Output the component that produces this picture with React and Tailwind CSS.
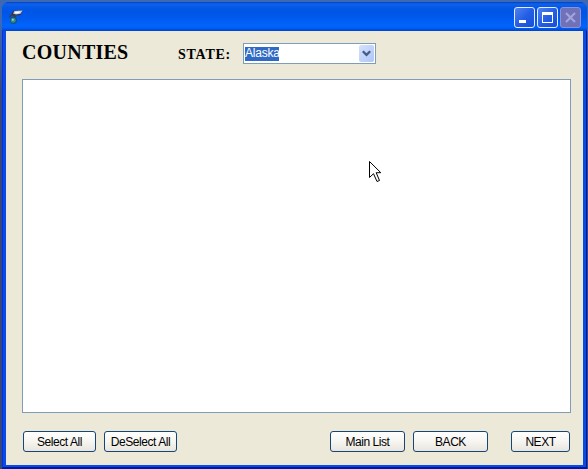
import React from "react";

function AppIcon() {
  return (
    <svg width="16" height="16" viewBox="0 0 16 16" className="block">
      <path d="M3 5.500 L5 2 L14.500 1.500 L12.500 6 L8 6.500 Z" fill="#2b3350" />
      <path d="M5 4.500 L6.500 2 L14.500 1.500 L12.500 4.800 L8 5.500 Z" fill="#cfc9cb" />
      <path d="M7 3 L12 2.400 L11 4 L7.500 4.600 Z" fill="#fff" />
      <path d="M2 8.500 Q2 5.500 5.500 6.500 L8 7.500" fill="none" stroke="#3c3f49" strokeWidth="1.500" />
      <circle cx="5.500" cy="11.300" r="3.500" fill="#214e62" />
      <circle cx="5.200" cy="11.300" r="2.500" fill="#318f92" />
      <circle cx="4.900" cy="10.800" r="1" fill="#8fd4c4" />
    </svg>
  );
}

const captionBase =
  "flex h-[21px] w-[21px] items-center justify-center rounded-[3px] border";

function CaptionButton({ children, disabled, label }) {
  return (
    <button
      aria-label={label}
      className={
        disabled
          ? `${captionBase} border-[#8a92d8] bg-[#6f72b8]`
          : `${captionBase} border-[#e4edff] bg-linear-to-br from-[#4f82f0] via-[#245ee4] to-[#1550d8]`
      }
    >
      {children}
    </button>
  );
}

function TitleBar() {
  return (
    <header className="flex h-[29px] shrink-0 items-center justify-between rounded-t-[7px] bg-[linear-gradient(to_bottom,#0040c0_0px,#0f62ea_2px,#0559e8_5px,#0055e5_9px,#0058ec_15px,#0062fa_22px,#0064fc_25px,#0056e9_27px,#0042c8_29px)] pr-[6px] pl-[6px]">
      <AppIcon />
      <div className="flex gap-[2px] pt-px">
        <CaptionButton label="Minimize">
          <svg width="19" height="19" shapeRendering="crispEdges">
            <rect x="4" y="12" width="7" height="3" fill="#fff" />
          </svg>
        </CaptionButton>
        <CaptionButton label="Maximize">
          <svg width="19" height="19" shapeRendering="crispEdges">
            <path d="M4 4H15V15H4Z M5 7V14H14V7Z" fill="#fff" fillRule="evenodd" />
          </svg>
        </CaptionButton>
        <CaptionButton label="Close" disabled>
          <svg width="19" height="19">
            <path d="M5 5L14 14M14 5L5 14" stroke="#a3a3de" strokeWidth="2.200" />
          </svg>
        </CaptionButton>
      </div>
    </header>
  );
}

function PushButton({ children, className }) {
  return (
    <button
      className={`flex h-[21px] items-center justify-center rounded-[3px] border border-[#174577] bg-linear-to-b from-white via-[#f6f5f1] to-[#e8e5dc] pt-px text-[12px] leading-none tracking-[-0.45px] whitespace-nowrap text-black ${className}`}
    >
      {children}
    </button>
  );
}

function StateSelect() {
  return (
    <div className="ml-[11px] flex h-[21px] w-[133px] items-center justify-between border border-[#7f9db9] bg-white pr-px pl-px">
      <span className="h-[14px] w-[34px] bg-[#316ac5] text-[12px] leading-[13px] tracking-[-0.2px] whitespace-nowrap text-white">
        Alaska
      </span>
      <span className="flex h-[17px] w-[15px] items-center justify-center rounded-[2px] bg-linear-to-br from-[#d5e1fd] to-[#aec6f5]">
        <svg width="9" height="7" viewBox="0 0 9 7">
          <path d="M.8 1.200L4.500 4.900L8.200 1.200" fill="none" stroke="#435d8b" strokeWidth="2.300" />
        </svg>
      </span>
    </div>
  );
}

function Pointer() {
  return (
    <svg
      className="absolute top-[161px] left-[369px]"
      width="13"
      height="22"
      viewBox="0 0 13 22"
    >
      <path
        d="M.5 .5V16.500L4.500 12.700L8 20.500L10.500 19.500L7.200 11.700H11.800Z"
        fill="#fff"
        stroke="#000"
      />
    </svg>
  );
}

export default function App() {
  return (
    <div className="relative h-[469px] w-[588px] overflow-hidden bg-linear-to-b from-[#3c68b4] from-5% to-[#35477c] to-20% pt-[2px] pr-px pl-[2px] font-['Liberation_Sans',Arial,sans-serif]">
      <div className="flex h-[467px] flex-col rounded-t-[7px] bg-[#0a4be6]">
        <TitleBar />
        <div className="flex h-[438px] border-b-2 border-l border-r border-t-0 border-l-[#0831d9] border-r-[#0019a4] border-b-[#0019a4] pr-[3px] pb-[2px] pl-[3px]">
          <main className="flex flex-1 flex-col bg-[#ece9d8] pr-[12px] pl-[16px]">
            <div className="flex h-[48px] pt-[12px]">
              <h1 className="-mt-[2px] w-[156px] font-['Liberation_Serif',serif] text-[20px] leading-[23px] font-bold tracking-[0.25px] text-black">
                COUNTIES
              </h1>
              <label className="-mt-px w-[54px] font-['Liberation_Serif',serif] text-[14px] leading-[25px] font-bold tracking-[0.75px] whitespace-nowrap text-black">
                STATE:
              </label>
              <StateSelect />
            </div>
            <div className="h-[334px] w-[549px] border border-[#7f9db9] bg-white" />
            <div className="flex pt-[18px] pl-px">
              <PushButton className="w-[73px]">Select All</PushButton>
              <PushButton className="ml-[8px] w-[73px]">DeSelect All</PushButton>
              <PushButton className="ml-[153px] w-[75px]">Main List</PushButton>
              <PushButton className="ml-[8px] w-[75px]">BACK</PushButton>
              <PushButton className="ml-[23px] w-[59px]">NEXT</PushButton>
            </div>
          </main>
        </div>
      </div>
      <Pointer />
    </div>
  );
}
